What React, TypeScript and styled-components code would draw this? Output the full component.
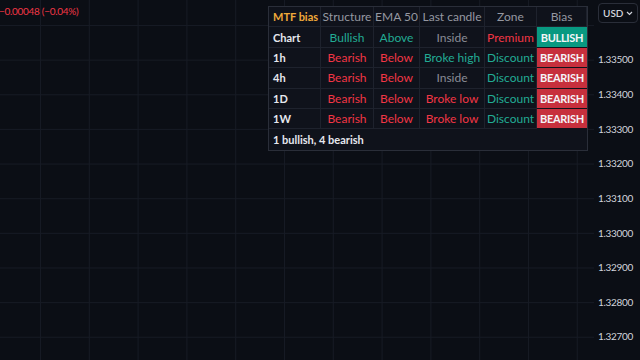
import styled, { createGlobalStyle } from "styled-components";

const GlobalStyle = createGlobalStyle`
  html, body {
    margin: 0;
    padding: 0;
    background: #0b0e15;
  }
  * {
    box-sizing: border-box;
  }
`;

const Screen = styled.div`
  width: 640px;
  height: 360px;
  display: flex;
  overflow: hidden;
  background: #0b0e15;
  font-family: Lato, "Noto Sans", sans-serif;
`;

const Chart = styled.div`
  position: relative;
  flex: 1;
  background-color: #0b0e15;
  background-image: linear-gradient(to right, #161a24 1px, transparent 1px),
    linear-gradient(to bottom, #161a24 1px, transparent 1px);
  background-size: 48.8px 34.65px;
  background-position: 40px 25px;
`;

const Change = styled.div`
  position: absolute;
  top: 5px;
  left: -1px;
  font-size: 10px;
  letter-spacing: -0.3px;
  color: #f23645;
`;

const Table = styled.div`
  position: absolute;
  top: 6px;
  left: 268px;
  width: 320px;
  display: grid;
  grid-template-columns: 52px 53px 46px 65px 52px 50px;
  grid-auto-rows: 20.4px;
  background: #0f121b;
  border: 1px solid #2a2e39;
  font-size: 12px;
`;

type Tone = "head" | "title" | "up" | "down" | "flat" | "label";

const toneColor: Record<Tone, string> = {
  head: "#9598a1",
  title: "#f0a93a",
  up: "#22ab94",
  down: "#f23645",
  flat: "#8a8d96",
  label: "#e6e8ee",
};

const Cell = styled.div<{ $tone: Tone; $left?: boolean }>`
  display: flex;
  align-items: center;
  justify-content: ${(p) => (p.$left ? "flex-start" : "center")};
  padding: 0 ${(p) => (p.$left ? "4px" : "2px")};
  color: ${(p) => toneColor[p.$tone]};
  font-weight: ${(p) => (p.$tone === "title" || p.$tone === "label" ? 700 : 400)};
  font-size: ${(p) => (p.$tone === "title" || p.$tone === "label" ? "11px" : "12px")};
  border-right: 1px solid #1e222d;
  border-bottom: 1px solid #1e222d;
  white-space: nowrap;
`;

const Badge = styled.div<{ $bull: boolean }>`
  display: flex;
  align-items: center;
  justify-content: center;
  background: ${(p) => (p.$bull ? "#089981" : "#c7303d")};
  color: #f4f5f8;
  font-size: 11px;
  font-weight: 700;
  letter-spacing: -0.3px;
  border-bottom: 1px solid #0f121b;
  white-space: nowrap;
`;

const Footer = styled.div`
  grid-column: 1 / -1;
  display: flex;
  align-items: center;
  padding: 0 4px;
  color: #e6e8ee;
  font-size: 11px;
  font-weight: 700;
`;

const Axis = styled.div`
  width: 46px;
  display: flex;
  flex-direction: column;
  align-items: flex-end;
  padding: 3px 2px 0 0;
  background: #0b0e15;
`;

const CurrencyButton = styled.div`
  width: 40px;
  height: 20px;
  display: flex;
  align-items: center;
  justify-content: space-between;
  padding: 0 4px 0 4px;
  border: 1px solid #2a2e39;
  border-radius: 4px;
  color: #d1d4dc;
  font-size: 10px;
  font-weight: 600;
`;

const Prices = styled.div`
  margin-top: 19px;
  display: flex;
  flex-direction: column;
  align-items: flex-end;
`;

const Price = styled.div`
  height: 34.65px;
  display: flex;
  align-items: center;
  padding-right: 5px;
  color: #d1d4dc;
  font-size: 10px;
  letter-spacing: -0.3px;
`;

interface Row {
  tf: string;
  structure: string;
  ema: string;
  candle: string;
  zone: string;
  bull: boolean;
}

const rows: Row[] = [
  { tf: "Chart", structure: "Bullish", ema: "Above", candle: "Inside", zone: "Premium", bull: true },
  { tf: "1h", structure: "Bearish", ema: "Below", candle: "Broke high", zone: "Discount", bull: false },
  { tf: "4h", structure: "Bearish", ema: "Below", candle: "Inside", zone: "Discount", bull: false },
  { tf: "1D", structure: "Bearish", ema: "Below", candle: "Broke low", zone: "Discount", bull: false },
  { tf: "1W", structure: "Bearish", ema: "Below", candle: "Broke low", zone: "Discount", bull: false },
];

const toneOf = (v: string): Tone => {
  if (["Bullish", "Above", "Broke high", "Discount"].includes(v)) return "up";
  if (["Bearish", "Below", "Broke low", "Premium"].includes(v)) return "down";
  return "flat";
};

const prices = ["1.33500", "1.33400", "1.33300", "1.33200", "1.33100", "1.33000", "1.32900", "1.32800", "1.32700"];

function App() {
  return (
    <>
      <GlobalStyle />
      <Screen>
        <Chart>
          <Change>−0.00048 (−0.04%)</Change>
          <Table>
            <Cell $tone="title" $left>MTF bias</Cell>
            <Cell $tone="head">Structure</Cell>
            <Cell $tone="head">EMA 50</Cell>
            <Cell $tone="head">Last candle</Cell>
            <Cell $tone="head">Zone</Cell>
            <Cell $tone="head">Bias</Cell>
            {rows.map((r) => [
              <Cell key={r.tf + "tf"} $tone="label" $left>{r.tf}</Cell>,
              <Cell key={r.tf + "s"} $tone={toneOf(r.structure)}>{r.structure}</Cell>,
              <Cell key={r.tf + "e"} $tone={toneOf(r.ema)}>{r.ema}</Cell>,
              <Cell key={r.tf + "c"} $tone={toneOf(r.candle)}>{r.candle}</Cell>,
              <Cell key={r.tf + "z"} $tone={toneOf(r.zone)}>{r.zone}</Cell>,
              <Badge key={r.tf + "b"} $bull={r.bull}>{r.bull ? "BULLISH" : "BEARISH"}</Badge>,
            ])}
            <Footer>1 bullish, 4 bearish</Footer>
          </Table>
        </Chart>
        <Axis>
          <CurrencyButton>
            USD
            <svg width="7" height="5" viewBox="0 0 7 5">
              <path d="M1 1l2.5 2.5L6 1" stroke="#d1d4dc" strokeWidth="1.2" fill="none" />
            </svg>
          </CurrencyButton>
          <Prices>
            {prices.map((p) => (
              <Price key={p}>{p}</Price>
            ))}
          </Prices>
        </Axis>
      </Screen>
    </>
  );
}

export default App;
